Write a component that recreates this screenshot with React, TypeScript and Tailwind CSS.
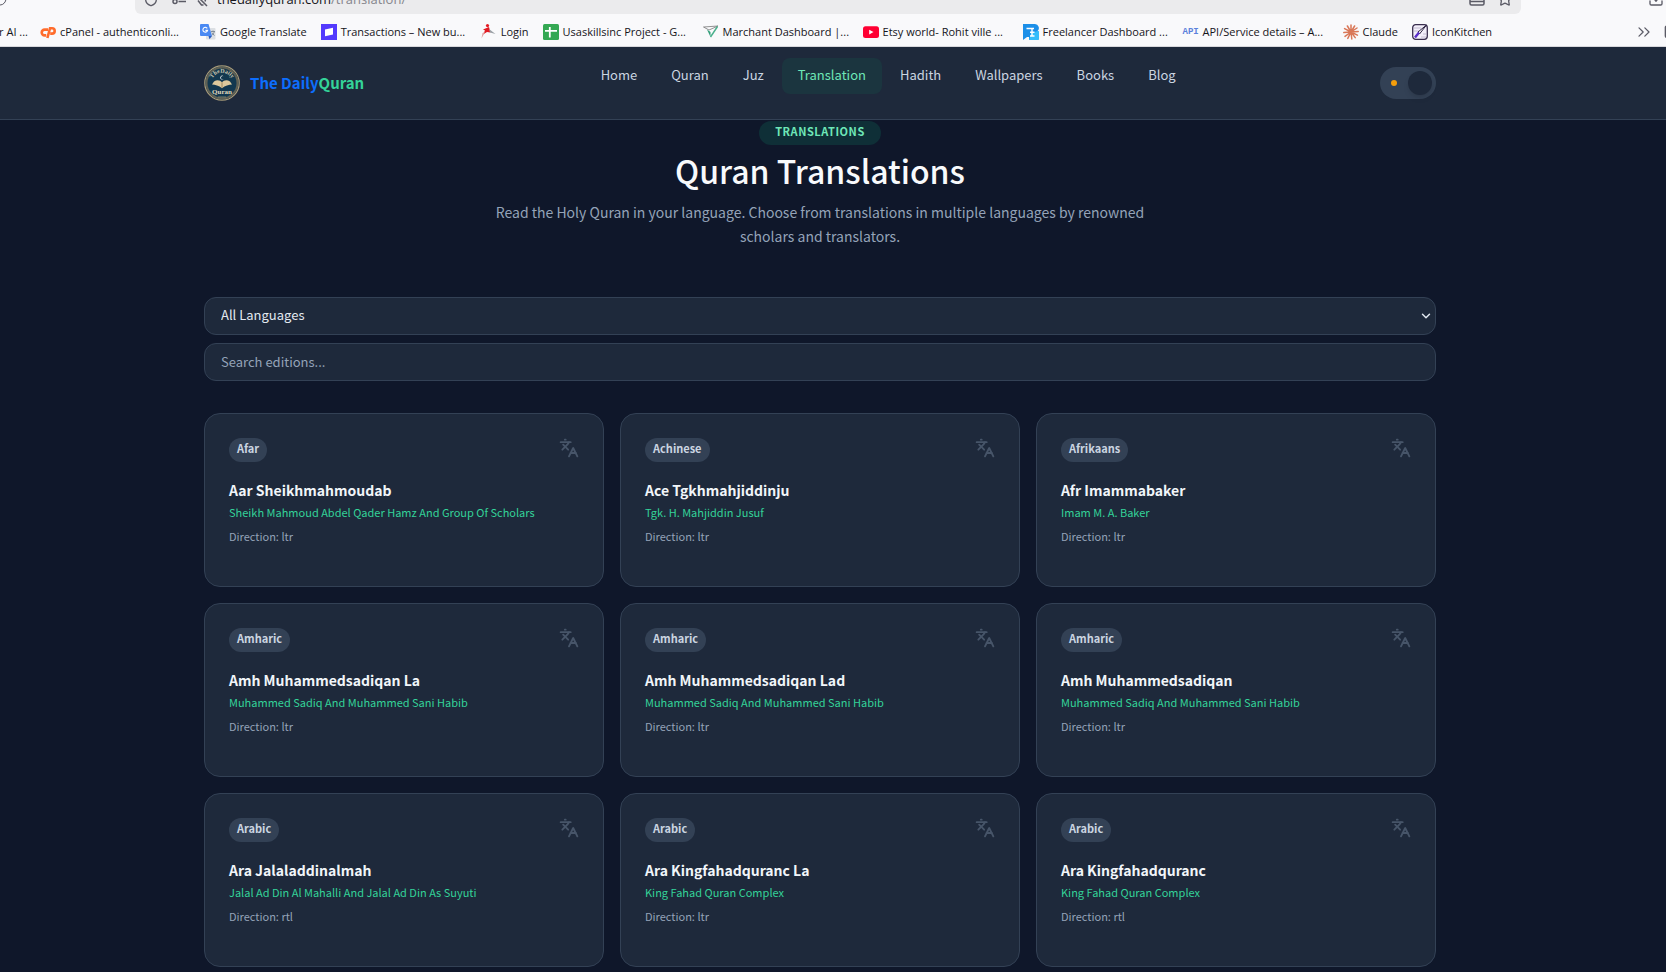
import type { ReactNode } from "react";
import { ChevronDown, ChevronsRight, Download, Folder, Languages, RotateCw, Shield, Star } from "lucide-react";

type Edition = { language: string; title: string; author: string; direction: "ltr" | "rtl" };

const editions: Edition[] = [
  { language: "Afar", title: "Aar Sheikhmahmoudab", author: "Sheikh Mahmoud Abdel Qader Hamz And Group Of Scholars", direction: "ltr" },
  { language: "Achinese", title: "Ace Tgkhmahjiddinju", author: "Tgk. H. Mahjiddin Jusuf", direction: "ltr" },
  { language: "Afrikaans", title: "Afr Imammabaker", author: "Imam M. A. Baker", direction: "ltr" },
  { language: "Amharic", title: "Amh Muhammedsadiqan La", author: "Muhammed Sadiq And Muhammed Sani Habib", direction: "ltr" },
  { language: "Amharic", title: "Amh Muhammedsadiqan Lad", author: "Muhammed Sadiq And Muhammed Sani Habib", direction: "ltr" },
  { language: "Amharic", title: "Amh Muhammedsadiqan", author: "Muhammed Sadiq And Muhammed Sani Habib", direction: "ltr" },
  { language: "Arabic", title: "Ara Jalaladdinalmah", author: "Jalal Ad Din Al Mahalli And Jalal Ad Din As Suyuti", direction: "rtl" },
  { language: "Arabic", title: "Ara Kingfahadquranc La", author: "King Fahad Quran Complex", direction: "ltr" },
  { language: "Arabic", title: "Ara Kingfahadquranc", author: "King Fahad Quran Complex", direction: "rtl" },
];

const navItems = ["Home", "Quran", "Juz", "Translation", "Hadith", "Wallpapers", "Books", "Blog"];

const iconClass = "size-4 shrink-0";

const bookmarks: { label: string; wide?: boolean; icon: ReactNode }[] = [
  {
    label: "cPanel - authenticonli...",
    wide: true,
    icon: (
      <svg viewBox="0 0 16 16" className={iconClass} fill="none" stroke="#ff6c2c" strokeWidth="2.6">
        <path d="M8 5.6H4.6a2.9 2.9 0 0 0 0 5.8h1.6" />
        <path d="M7.4 14 10 4.2h2a2.6 2.6 0 0 1 0 5.4h-1.8" />
      </svg>
    ),
  },
  {
    label: "Google Translate",
    icon: (
      <svg viewBox="0 0 16 16" className={iconClass}>
        <rect x="6" y="4" width="9.5" height="11.5" rx="1" fill="#dcdfe3" />
        <path d="M1 0h7.5l3.5 12H1a1 1 0 0 1-1-1V1a1 1 0 0 1 1-1z" fill="#4a89f3" />
        <path d="M8.5 12H12l-2.5 3.2z" fill="#2a5cc0" />
        <path d="M7.3 4.4A2.4 2.4 0 1 0 7.6 6.4H5.4" fill="none" stroke="#fff" strokeWidth="1.1" />
        <path d="M11 7.5h4M13 6.5v1M14.3 7.5c-.4 1.8-1.5 3-2.6 3.8M11.9 8.6l2.5 3" fill="none" stroke="#7b8794" strokeWidth=".9" />
      </svg>
    ),
  },
  {
    label: "Transactions – New bu...",
    wide: true,
    icon: (
      <svg viewBox="0 0 16 16" className={iconClass}>
        <path d="M0 0h16v16H0z" fill="#533afd" />
        <path d="M4 5.6 12 3.8v6.6l-8 1.8z" fill="#fff" />
      </svg>
    ),
  },
  {
    label: "Login",
    icon: (
      <svg viewBox="0 0 16 16" className={iconClass}>
        <circle cx="6.5" cy="1.6" r="1.6" fill="#e21b23" />
        <path d="M2 5.5 8 3l1.5 5.5-3.5-.5-4 2.5L4 6.5z" fill="#e21b23" />
        <path d="M8 5 14.5 10 9 8.5z" fill="#9aa0a6" />
        <path d="M4 8 .5 14.5 1.5 9z" fill="#e0a0a0" />
      </svg>
    ),
  },
  {
    label: "Usaskillsinc Project - G...",
    wide: true,
    icon: (
      <svg viewBox="0 0 16 16" className={iconClass}>
        <rect width="16" height="16" rx="1.5" fill="#34a853" />
        <path d="M2 6.8h12M6.8 3v10.5" stroke="#fff" strokeWidth="1.8" />
      </svg>
    ),
  },
  {
    label: "Marchant Dashboard |...",
    wide: true,
    icon: (
      <svg viewBox="0 0 16 16" className={iconClass} fill="none">
        <path d="M.5 3 15 2 6 6z" stroke="#777" strokeWidth=".8" />
        <path d="M4 5.5 7.5 13V8z" fill="#2f9d78" />
        <path d="M14.5 2.5 7.5 13" stroke="#49b08c" strokeWidth="1.4" />
      </svg>
    ),
  },
  {
    label: "Etsy world- Rohit ville ...",
    wide: true,
    icon: (
      <svg viewBox="0 0 16 16" className={iconClass}>
        <rect y="2.3" width="16" height="11.6" rx="2.5" fill="#ff0033" />
        <path d="m6.2 5.8 4.3 2.3-4.3 2.3z" fill="#fff" />
      </svg>
    ),
  },
  {
    label: "Freelancer Dashboard ...",
    wide: true,
    icon: (
      <svg viewBox="0 0 16 16" className={iconClass}>
        <path d="M0 0h12a4 4 0 0 1 2.5 7A4.5 4.5 0 0 1 11.5 16H6v-3H4L0 16z" fill="#1c8fe8" />
        <path d="M6 16h5.5a4.5 4.5 0 0 0 3-9L8 9z" fill="#35bdfb" />
        <path d="M3.5 4.5H11M7 8.2h4.5M7 12h4.5M9 4.5V12" stroke="#fff" strokeWidth="1.4" fill="none" />
      </svg>
    ),
  },
  {
    label: "API/Service details – A...",
    wide: true,
    icon: (
      <span aria-hidden="true" className="w-4 shrink-0 text-center font-['Liberation_Mono',monospace] text-[9px] font-bold text-[#5b82dc]">
        API
      </span>
    ),
  },
  {
    label: "Claude",
    icon: (
      <svg viewBox="0 0 16 16" className={iconClass} stroke="#d97757" strokeWidth="1.5" strokeLinecap="round">
        <path d="M8 8V1M8 8l3.6-6M8 8l6-4M8 8l7.2-.6M8 8l6.4 3.2M8 8l4.2 5.6M8 8l.8 7M8 8l-3.2 6.4M8 8l-6 4.4M8 8l-7.2.6M8 8 1.6 4.6M8 8 4.4 2" />
      </svg>
    ),
  },
  {
    label: "IconKitchen",
    icon: (
      <svg viewBox="0 0 16 16" className={iconClass} fill="none">
        <rect x=".7" y=".7" width="14.6" height="14.6" rx="3" fill="#f3effa" stroke="#3a2f4f" strokeWidth="1.3" />
        <path d="M2 4h7M2 7h5M9 13h5M11 10h3" stroke="#b8b0c8" strokeWidth=".8" />
        <path d="M14.5 1 6 8l1.5 2L14.5 1z" fill="#fff" stroke="#2b2140" />
        <path d="M7 8.5 3 13.5" stroke="#5b2fc9" strokeWidth="2.4" />
      </svg>
    ),
  },
];

function BrowserChrome() {
  return (
    <div className="border-b border-[#d8d8dc] bg-[#f9f9fb] font-['Open_Sans','Noto_Sans',sans-serif] text-[#15141a]">
      <div className="flex h-3.5 items-end overflow-hidden text-[#5b5b66]">
        <div className="flex h-[30px] w-[135px] shrink-0 items-center">
          <RotateCw className="-ml-2 size-4" strokeWidth={1.5} />
        </div>
        <div className="flex h-[30px] flex-1 items-center rounded-md bg-[#ebebed] px-2">
          <Shield className="size-4" strokeWidth={2} />
          <svg viewBox="0 0 16 16" className="ml-3 size-4" fill="none" stroke="currentColor" strokeWidth="1.5">
            <circle cx="12" cy="5" r="2" />
            <path d="M1 5h8" />
            <circle cx="4" cy="10.5" r="2" />
            <path d="M7.5 10.5H15" />
          </svg>
          <svg viewBox="0 0 16 16" className="ml-1.5 size-4" fill="none" stroke="currentColor" strokeWidth="1.5">
            <path d="m2 3 12 12M5 9.5 8.5 14h2M12 10.5 13 7 9 2" />
          </svg>
          <span className="ml-2 text-[13px] leading-5 text-[#15141a]">
            thedailyquran.com<span className="text-[#85858c]">/translation/</span>
          </span>
          <span className="ml-auto flex items-center gap-3">
            <svg viewBox="0 0 16 16" className="size-4" fill="none" stroke="currentColor" strokeWidth="1.5">
              <rect x="1" y="2" width="14" height="12" rx="1.5" />
              <path d="M1 10.5h14" />
            </svg>
            <Star className="size-4" strokeWidth={2} />
          </span>
        </div>
        <div className="flex h-[30px] w-[145px] shrink-0 items-center justify-end">
          <Download className="mr-0.5 size-4" strokeWidth={2} />
        </div>
      </div>
      <nav aria-label="Bookmarks" className="flex h-8 items-center overflow-hidden pt-1 text-[11px] leading-4 whitespace-nowrap">
        <a href="#" className="flex w-10 shrink-0 justify-end pr-3">
          r AI ...
        </a>
        {bookmarks.map((b) => (
          <a key={b.label} href="#" className={b.wide ? "flex w-40 shrink-0 items-center gap-1" : "flex shrink-0 items-center gap-1 pr-3.5"}>
            {b.icon}
            {b.label}
          </a>
        ))}
        <ChevronsRight className="ml-auto size-5 shrink-0 text-[#5b5b66]" strokeWidth={1.5} />
        <Folder className="-mr-3.5 ml-2.5 size-4 shrink-0 text-[#5b5b66]" strokeWidth={2} />
      </nav>
    </div>
  );
}

function Logo() {
  return (
    <svg viewBox="0 0 36 36" className="size-9" aria-hidden="true">
      <defs>
        <path id="logo-arc" d="M7.5 16a10.8 10.8 0 0 1 21 0" />
      </defs>
      <circle cx="18" cy="18" r="17.2" fill="#12384f" stroke="#a89a78" strokeWidth="1.2" />
      <circle cx="18" cy="18" r="15.5" fill="none" stroke="#5f6054" strokeWidth="2" />
      <text fill="#c9c4ae" fontFamily="Liberation Serif, serif" fontSize="6" textAnchor="middle">
        <textPath href="#logo-arc" startOffset="50%">
          TheDaily
        </textPath>
      </text>
      <path d="M19.5 11.2a2 2 0 1 0 .4 2.6 1.7 1.7 0 1 1-.4-2.6z" fill="#fff" />
      <path d="M10 16.5c3-2 6-1.5 8 .8 2-2.3 5-2.8 8-.8l2 3c-3 0-7 1.2-10 3.8-3-2.6-7-3.8-10-3.8z" fill="#dcc99c" />
      <path d="M18 17.3v5.5" stroke="#8d7a50" strokeWidth=".8" />
      <text x="18" y="29" fill="#e0d8bd" fontFamily="Liberation Serif, serif" fontSize="7" textAnchor="middle">
        Quran
      </text>
      <path d="M14 32h8" stroke="#8f8a70" strokeWidth=".8" />
    </svg>
  );
}

function SiteHeader() {
  return (
    <header className="border-b border-[#334155] bg-[#1e293b] pr-[26px]">
      <div className="mx-auto flex h-[72px] max-w-7xl items-center justify-between px-6">
        <a href="#" className="mr-8 flex items-center gap-2.5 text-[15px] leading-6 font-bold text-[#0d6efd]">
          <Logo />
          <span>
            The Daily<span className="text-[#34d399]">Quran</span>
          </span>
        </a>
        <nav aria-label="Main" className="mb-3.5 flex gap-0.5 text-[13px] leading-5 text-[#cbd5e1]">
          {navItems.map((item) => (
            <a
              key={item}
              href="#"
              aria-current={item === "Translation" ? "page" : undefined}
              className={item === "Translation" ? "rounded-lg bg-[#1b353f] px-4 pt-[7px] pb-[9px] text-[#6ee7b7]" : "rounded-lg px-4 pt-[7px] pb-[9px]"}
            >
              {item}
            </a>
          ))}
        </nav>
        <button type="button" role="switch" aria-checked="true" aria-label="Dark mode" className="flex h-8 w-14 items-center justify-between rounded-full bg-[#334155] pr-1 pl-[11px]">
          <span className="size-1.5 rounded-full bg-[#f59e0b]" />
          <span className="size-6 rounded-full bg-[#1e293b] shadow-md" />
        </button>
      </div>
    </header>
  );
}

function EditionCard({ language, title, author, direction }: Edition) {
  return (
    <article className="h-[174px] rounded-2xl border border-[#334155] bg-[#1e293b] p-6">
      <div className="flex items-start justify-between">
        <span className="rounded-full bg-[#334155] px-2 pt-0.5 pb-1.5 text-[11px] leading-4 font-bold text-[#cbd5e1]">{language}</span>
        <Languages className="size-5 text-[#475569]" strokeWidth={2.25} aria-hidden="true" />
      </div>
      <h2 className="mt-4 text-[14px] leading-6 font-bold text-[#f1f5f9]">{title}</h2>
      <p className="mt-0.5 text-[11px] leading-4 text-[#34d399]">{author}</p>
      <p className="mt-2 text-[11px] leading-4 text-[#94a3b8]">Direction: {direction}</p>
    </article>
  );
}

export default function App() {
  return (
    <div className="min-h-screen bg-[#0f172a] font-['Noto_Sans_CJK_SC',sans-serif]">
      <BrowserChrome />
      <SiteHeader />
      <main className="pr-[26px]">
        <div className="mx-auto max-w-7xl px-6 pb-6">
          <section className="flex flex-col items-center pt-px text-center">
            <span className="rounded-full bg-[#0f2f37] px-4 pt-0.5 pb-1.5 text-[11px] leading-4 font-bold tracking-wider text-[#6ee7b7] uppercase">Translations</span>
            <h1 className="mt-[5px] text-[32px] leading-10 font-medium text-[#f8fafc]">Quran Translations</h1>
            <p className="mt-2.5 max-w-2xl text-[14px] leading-6 text-[#94a3b8]">
              Read the Holy Quran in your language. Choose from translations in multiple languages by renowned scholars and translators.
            </p>
          </section>
          <form className="mt-[49px] flex flex-col gap-2 text-[13px] leading-5">
            <div className="relative flex">
              <select aria-label="Language" className="h-[38px] w-full appearance-none rounded-xl border border-[#334155] bg-[#1e293b] px-4 pb-0.5 text-[#e2e8f0]">
                <option>All Languages</option>
              </select>
              <ChevronDown className="pointer-events-none absolute top-3 right-[3px] size-3.5 text-[#e2e8f0]" strokeWidth={2.5} aria-hidden="true" />
            </div>
            <input type="search" aria-label="Search editions" placeholder="Search editions..." className="h-[38px] w-full rounded-xl border border-[#334155] bg-[#1e293b] px-4 pb-0.5 text-[#e2e8f0] placeholder:text-[#94a3b8]" />
          </form>
          <section aria-label="Editions" className="mt-8 grid grid-cols-3 gap-4">
            {editions.map((e) => (
              <EditionCard key={e.title} {...e} />
            ))}
          </section>
        </div>
      </main>
    </div>
  );
}
